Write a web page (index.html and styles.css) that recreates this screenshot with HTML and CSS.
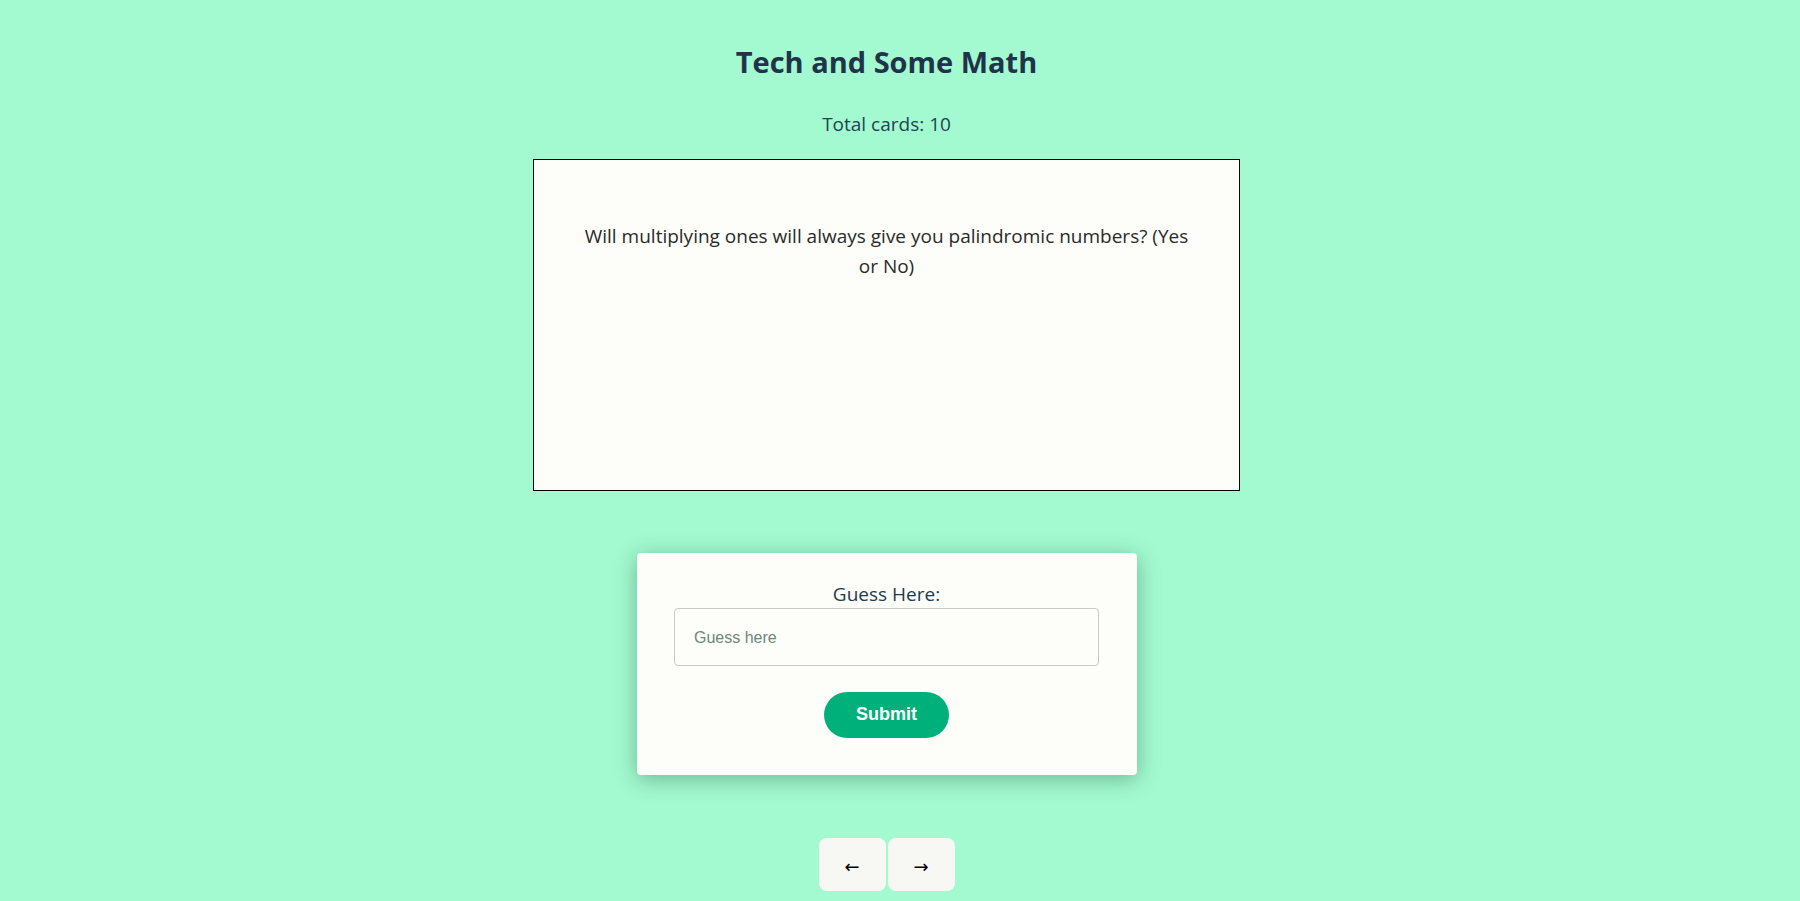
FILE: index.html
```html
<!DOCTYPE html>
<html lang="en">
<head>
<meta charset="utf-8">
<title>Tech and Some Math</title>
<link rel="stylesheet" href="styles.css">
</head>
<body>
<div class="page">
  <h1 class="title">Tech and Some Math</h1>
  <p class="count">Total cards: 10</p>
  <div class="card">
    <p class="question">Will multiplying ones will always give you palindromic numbers? (Yes or No)</p>
  </div>
  <form class="guess-box">
    <label class="guess-label" for="guess">Guess Here:</label>
    <input class="guess-input" id="guess" type="text" placeholder="Guess here">
    <button class="submit-btn" type="button">Submit</button>
  </form>
  <div class="nav">
    <button class="nav-btn" type="button">←</button>
    <button class="nav-btn" type="button">→</button>
  </div>
</div>
</body>
</html>
```

FILE: styles.css
```css
html, body {
  margin: 0;
  padding: 0;
  background: #a3fad0;
}
body {
  font-family: "Open Sans", "Noto Sans", sans-serif;
  color: #1e3b4d;
}
.page {
  width: 1773px;
  display: flex;
  flex-direction: column;
  align-items: center;
  text-align: center;
}
.title {
  margin: 42px 0 0;
  font-size: 29px;
  line-height: 40px;
  font-weight: 700;
  color: #1f344a;
}
.count {
  margin: 28px 0 0;
  font-size: 19px;
  line-height: 28px;
  color: #1e4352;
}
.card {
  box-sizing: border-box;
  margin-top: 21px;
  width: 707px;
  height: 332px;
  border: 1px solid #000;
  background: #fdfef9;
  padding: 61px 44px 0;
}
.question {
  margin: 0;
  font-size: 19px;
  line-height: 30px;
  color: #2a2a2a;
}
.guess-box {
  box-sizing: border-box;
  margin-top: 62px;
  width: 500px;
  height: 222px;
  background: #fdfef9;
  border-radius: 4px;
  box-shadow: 0 4px 22px rgba(0, 60, 30, 0.35);
  display: flex;
  flex-direction: column;
  align-items: center;
  padding-top: 28px;
}
.guess-label {
  font-size: 19px;
  line-height: 27px;
  color: #1e3b4d;
}
.guess-input {
  box-sizing: border-box;
  width: 425px;
  height: 58px;
  border: 1px solid #c9c9c6;
  border-radius: 4px;
  background: #fdfef9;
  padding: 2px 19px 0;
  font-family: "Liberation Sans", Arial, sans-serif;
  font-size: 16px;
  color: #222;
}
.guess-input::placeholder {
  color: #6d8778;
}
.submit-btn {
  margin-top: 26px;
  width: 125px;
  height: 46px;
  border: none;
  border-radius: 23px;
  background: #00b07a;
  color: #fff;
  font-family: "Liberation Sans", Arial, sans-serif;
  font-weight: 700;
  font-size: 18px;
  padding: 0 0 2px;
  cursor: pointer;
}
.nav {
  margin-top: 63px;
  display: flex;
  gap: 2px;
}
.nav-btn {
  width: 67px;
  height: 53px;
  border: none;
  border-radius: 8px;
  background: #f7f8f4;
  color: #000;
  font-family: "DejaVu Sans", sans-serif;
  font-size: 18px;
  padding: 4px 0 0;
  cursor: pointer;
}
```
